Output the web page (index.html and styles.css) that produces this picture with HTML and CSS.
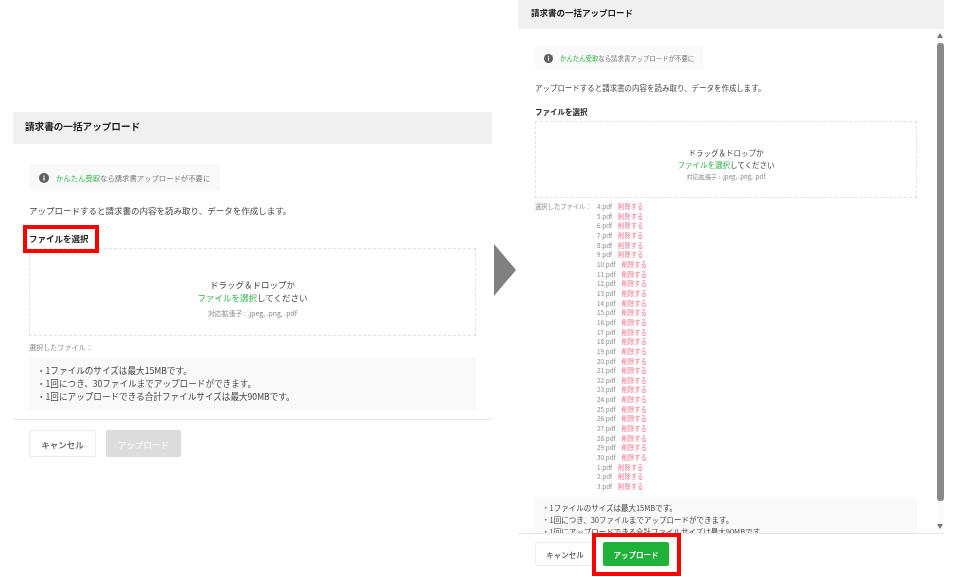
FILE: index.html
```html
<!DOCTYPE html>
<html lang="ja">
<head>
    <meta charset="UTF-8">
    <title>請求書の一括アップロード</title>
    <link rel="stylesheet" href="styles.css">
</head>
<body>
    <div class="slide">
        <!-- before -->
        <section class="dialog before">
            <h2 class="dialog-title">請求書の一括アップロード</h2>
            <div class="dialog-body">
                <div class="notice">
                    <svg class="info-icon" viewBox="0 0 12 12"><circle cx="6" cy="6" r="6" fill="#5f5f5f"/><rect x="5.2" y="5.2" width="1.6" height="3.8" fill="#fff"/><rect x="5.2" y="3" width="1.6" height="1.5" fill="#fff"/></svg>
                    <span><span class="green">かんたん受取</span>なら請求書アップロードが不要に</span>
                </div>
                <p class="lead">アップロードすると請求書の内容を読み取り、データを作成します。</p>
                <h3 class="field-label">ファイルを選択</h3>
                <div class="dropzone">
                    <div>ドラッグ＆ドロップか</div>
                    <div><span class="green">ファイルを選択</span>してください</div>
                    <div class="ext">対応拡張子 : .jpeg, .png, .pdf</div>
                </div>
                <div class="selected">
                    <span class="selected-label">選択したファイル：</span>
                </div>
                <ul class="rules">
                    <li>・1ファイルのサイズは最大15MBです。</li>
                    <li>・1回につき、30ファイルまでアップロードができます。</li>
                    <li>・1回にアップロードできる合計ファイルサイズは最大90MBです。</li>
                </ul>
            </div>
            <div class="dialog-footer">
                <button class="btn btn-cancel">キャンセル</button>
                <button class="btn btn-disabled">アップロード</button>
            </div>
            <div class="red-box label-mark"></div>
        </section>

        <div class="arrow"></div>

        <!-- after -->
        <section class="dialog after">
            <h2 class="dialog-title">請求書の一括アップロード</h2>
            <div class="dialog-body">
                <div class="notice">
                    <svg class="info-icon" viewBox="0 0 12 12"><circle cx="6" cy="6" r="6" fill="#5f5f5f"/><rect x="5.2" y="5.2" width="1.6" height="3.8" fill="#fff"/><rect x="5.2" y="3" width="1.6" height="1.5" fill="#fff"/></svg>
                    <span><span class="green">かんたん受取</span>なら請求書アップロードが不要に</span>
                </div>
                <p class="lead">アップロードすると請求書の内容を読み取り、データを作成します。</p>
                <h3 class="field-label">ファイルを選択</h3>
                <div class="dropzone">
                    <div>ドラッグ＆ドロップか</div>
                    <div><span class="green">ファイルを選択</span>してください</div>
                    <div class="ext">対応拡張子 : .jpeg, .png, .pdf</div>
                </div>
                <div class="selected">
                    <span class="selected-label">選択したファイル：</span>
                    <ul class="file-list" id="fileList"></ul>
                </div>
                <ul class="rules">
                    <li>・1ファイルのサイズは最大15MBです。</li>
                    <li>・1回につき、30ファイルまでアップロードができます。</li>
                    <li>・1回にアップロードできる合計ファイルサイズは最大90MBです。</li>
                </ul>
            </div>
            <div class="dialog-footer">
                <button class="btn btn-cancel">キャンセル</button>
                <button class="btn btn-upload">アップロード</button>
            </div>
            <div class="scrollbar">
                <span class="scroll-up"></span>
                <span class="scroll-thumb"></span>
                <span class="scroll-down"></span>
            </div>
            <div class="red-box button-mark"></div>
        </section>
    </div>

    <script>
        // 4〜30 のあとに 1〜3 が並ぶ
        const order = [];
        for (let i = 4; i <= 30; i++) order.push(i);
        order.push(1, 2, 3);
        document.getElementById('fileList').innerHTML = order.map(function (n) {
            return '<li><span>' + n + '.pdf</span><a>削除する</a></li>';
        }).join('');
    </script>
</body>
</html>
```

FILE: styles.css
```css
* {
    box-sizing: border-box;
}
body {
    margin: 0;
    background-color: #fff;
    font-family: "Noto Sans CJK JP", "Noto Sans", sans-serif;
    color: #333;
}
h2, h3, p, ul {
    margin: 0;
    padding: 0;
    font-size: inherit;
}
ul {
    list-style: none;
}
.slide {
    position: relative;
    width: 955px;
    height: 577px;
    overflow: hidden;
}
.green {
    color: #2fb84a;
}

/* dialogs sit on the slide like two pasted screenshots */
.dialog {
    position: absolute;
    display: flex;
    flex-direction: column;
}
.before {
    left: 13px;
    top: 112px;
    width: 479px;
    height: 353px;
}
.after {
    left: 518px;
    top: 0;
    width: 426px;
    height: 577px;
}
/* the source is a scaled-down capture, so the contents are a little soft */
.dialog-title, .dialog-body, .dialog-footer {
    filter: blur(0.3px);
}
.dialog-title {
    flex: none;
    background-color: #f0f0f0;
    color: #222;
    font-weight: 700;
    display: flex;
    align-items: center;
}
.before .dialog-title {
    height: 32px;
    padding: 0 0 4px 12px;
    font-size: 9.6px;
}
.after .dialog-title {
    height: 29px;
    padding: 0 0 6px 13px;
    font-size: 8.5px;
}
.dialog-body {
    flex: 1;
    min-height: 0;
    overflow: hidden;
}
.before .dialog-body {
    padding: 20px 16px 0;
}
.after .dialog-body {
    padding: 17px 27px 0 17px;
}

.notice {
    display: flex;
    align-items: center;
    background-color: #f9f9f9;
    border-radius: 2px;
    color: #777;
}
.before .notice {
    width: 191px;
    height: 27px;
    padding-left: 10px;
    gap: 7px;
    font-size: 7.35px;
}
.after .notice {
    width: 168px;
    height: 24px;
    padding-left: 9px;
    gap: 7px;
    font-size: 6.4px;
}
.info-icon {
    flex: none;
}
.before .info-icon {
    width: 10px;
    height: 10px;
}
.after .info-icon {
    width: 9px;
    height: 9px;
}

.lead {
    color: #444;
}
.before .lead {
    margin-top: 12px;
    font-size: 8.5px;
    line-height: 14px;
}
.after .lead {
    margin-top: 12px;
    font-size: 7.48px;
    line-height: 12px;
}
.field-label {
    font-weight: 700;
    color: #222;
}
.before .field-label {
    margin-top: 14px;
    font-size: 8.5px;
    line-height: 14px;
}
.after .field-label {
    margin-top: 12px;
    font-size: 7.5px;
    line-height: 12px;
}

.dropzone {
    display: flex;
    flex-direction: column;
    justify-content: center;
    align-items: center;
    border: 1px dashed #e2e2e2;
    color: #444;
}
.before .dropzone {
    height: 88px;
    margin-top: 3px;
    padding-top: 14px;
    font-size: 8.5px;
    line-height: 13px;
}
.after .dropzone {
    height: 77px;
    margin-top: 3px;
    padding-top: 10px;
    font-size: 7.5px;
    line-height: 12px;
}
.ext {
    color: #888;
}
.before .ext {
    margin-top: 3px;
    font-size: 6.9px;
}
.after .ext {
    font-size: 6.1px;
}

.selected {
    display: flex;
    color: #888;
}
.before .selected {
    margin-top: 5px;
    font-size: 7.1px;
    line-height: 12px;
}
.after .selected {
    margin-top: 4px;
    font-size: 6.3px;
    line-height: 9.66px;
}
.after .selected-label {
    flex: none;
    width: 62px;
}
.file-list li {
    display: flex;
    gap: 6px;
}
.file-list a {
    color: #f4728a;
}

.rules {
    background-color: #f9f9f9;
    color: #444;
}
.before .rules {
    margin-top: 4px;
    height: 53px;
    padding: 7px 8px;
    font-size: 8.6px;
    line-height: 13px;
}
.after .rules {
    margin-top: 5px;
    padding: 5.5px 7px;
    font-size: 7.5px;
    line-height: 11.8px;
}

.dialog-footer {
    flex: none;
    display: flex;
    border-top: 1px solid #e6e6e6;
}
.before .dialog-footer {
    padding: 10px 16px 8px;
    gap: 10px;
    margin-top: 9px;
}
.after .dialog-footer {
    padding: 8px 17px 11px;
    gap: 8px;
    background-color: #fff;
}
.btn {
    border-radius: 2px;
    border: 1px solid transparent;
    font-family: inherit;
    font-weight: 500;
    padding: 0;
}
.before .btn {
    height: 27px;
    font-size: 8.5px;
}
.after .btn {
    height: 24px;
    font-size: 7.5px;
}
.btn-cancel {
    background-color: #fff;
    border-color: #ececec;
    color: #555;
}
.before .btn-cancel {
    width: 67px;
}
.after .btn-cancel {
    width: 60px;
}
.btn-disabled {
    width: 75px;
    background-color: #dcdcdc;
    color: #f4f4f4;
    font-weight: 700;
}
.btn-upload {
    width: 66px;
    background-color: #1fb239;
    color: #fff;
    font-weight: 700;
}

/* scrollbar of the modal */
.scrollbar {
    position: absolute;
    right: 0;
    top: 29px;
    bottom: 44px;
    width: 7px;
    background-color: #fbfbfb;
}
.scroll-up, .scroll-down {
    position: absolute;
    left: 0;
    width: 0;
    height: 0;
    border-left: 3.5px solid transparent;
    border-right: 3.5px solid transparent;
}
.scroll-up {
    top: 4px;
    border-bottom: 5px solid #777;
}
.scroll-down {
    bottom: 4px;
    border-top: 5px solid #777;
}
.scroll-thumb {
    position: absolute;
    left: 0;
    top: 14px;
    width: 7px;
    height: 458px;
    background-color: #8a8a8a;
    border-radius: 3px;
}

/* red annotation frames */
.red-box {
    position: absolute;
    border: 4px solid #f00;
}
.label-mark {
    left: 10px;
    top: 113px;
    width: 76px;
    height: 28px;
}
.button-mark {
    left: 74px;
    top: 533px;
    width: 89px;
    height: 43px;
}

.arrow {
    position: absolute;
    left: 494px;
    top: 244px;
    width: 0;
    height: 0;
    border-top: 26px solid transparent;
    border-bottom: 26px solid transparent;
    border-left: 22px solid #808080;
}
```
